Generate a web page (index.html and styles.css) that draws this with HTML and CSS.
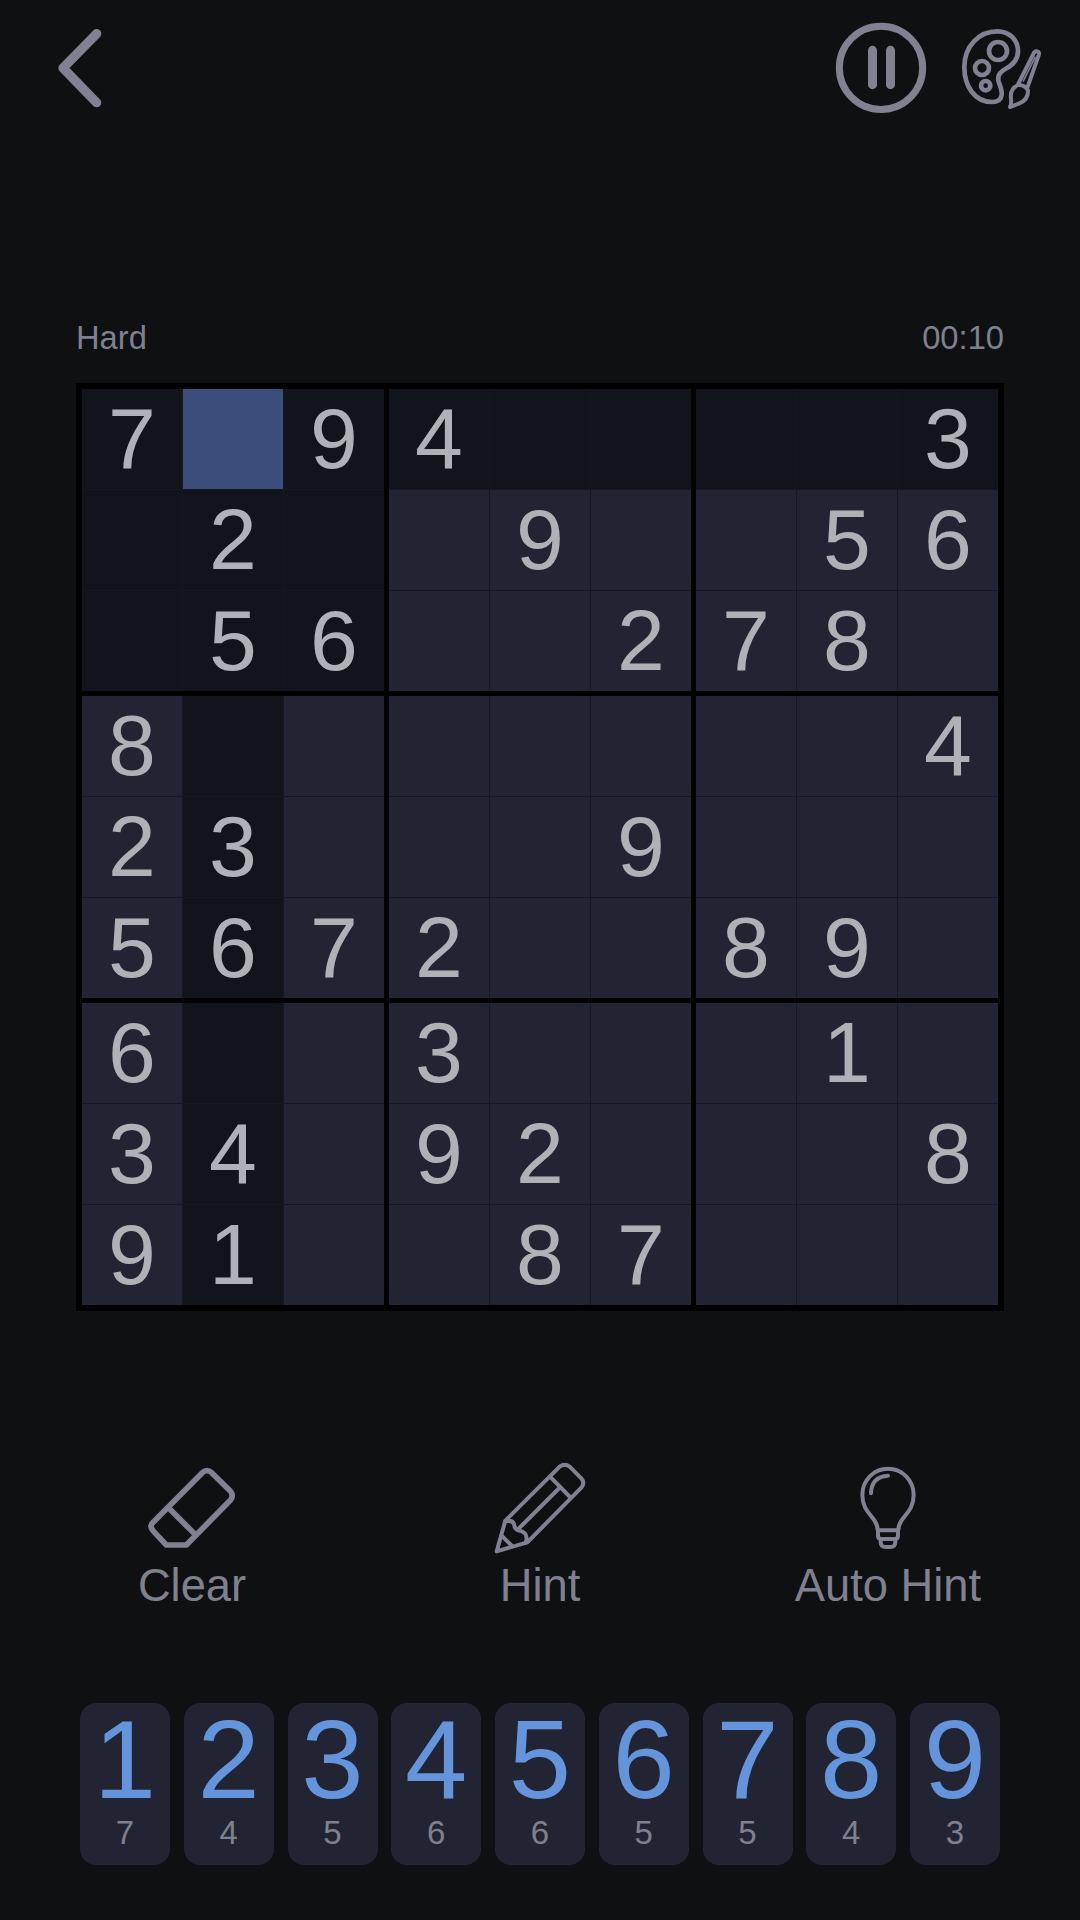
FILE: index.html
```html
<!DOCTYPE html>
<html lang="en">
<head>
  <meta charset="UTF-8">
  <meta name="viewport" content="width=device-width, initial-scale=1.0">
  <title>Sudoku</title>
  <link rel="stylesheet" href="styles.css">
</head>
<body>
  <header class="topbar">
    <svg class="icon back" viewBox="0 0 360 360" stroke-width="28">
      <path d="M200 71 L99 174 L200 278" />
    </svg>
    <svg class="icon" viewBox="0 0 360 360" stroke-width="21">
      <circle cx="183" cy="173.5" r="125" />
      <path d="M157.5 121 V224 M211.5 121 V224" stroke-width="27" />
    </svg>
    <svg class="icon" viewBox="360 0 360 360" stroke-width="14">
      <path d="M532 64 C570 64 594 91 594 124 C594 151 577 166 556 177 C539 186 531 198 536 215 C542 233 547 241 545 255 C543 270 532 276 516 276 C464 276 433 229 433 171 C433 108 477 64 532 64 Z" />
      <circle cx="534" cy="123" r="27" />
      <circle cx="486" cy="174" r="21" />
      <circle cx="497" cy="227" r="14" />
      <path d="M594 223 L642 128 Q646 122 652 124 Q658 126 657 133 L622 233" stroke-width="12" />
      <path d="M594 225 Q613 223 624 241 C625 263 610 275 598 280 Q584 286 570 291 Q575 282 573 266 C570 246 577 233 594 225 Z" stroke-width="12" />
      <path d="M610 213 L645 142" stroke-width="5" />
    </svg>
  </header>

  <main class="game">
    <div class="status">
      <span>Hard</span>
      <span>00:10</span>
    </div>
    <div class="board"></div>
  </main>

  <nav class="actions">
    <div class="action">
      <svg class="action-icon" viewBox="66 60 300 300" stroke-width="17">
        <path d="M247 98 Q261 86 275 98 L330 152 Q343 166 331 181 L199 315 H139 L98 271 Q88 258 98 248 Z" />
        <path d="M146 204 L222 280" />
      </svg>
      <span class="action-label">Clear</span>
    </div>
    <div class="action">
      <svg class="action-icon" viewBox="90 60 300 300" stroke-width="12">
        <path d="M136 242 L299 80 Q314 69 329 80 L364 115 Q376 129 364 143 L202 307 L110 334 Z" />
        <path d="M270 110 L330 171 M298 144 L176 266" />
        <path d="M136 244 Q157 239 162 252 Q164 270 179 272 Q198 278 198 288 Q202 297 197 307 M124 286 L156 318" />
      </svg>
      <span class="action-label">Hint</span>
    </div>
    <div class="action">
      <svg class="action-icon" viewBox="174 60 300 300" stroke-width="12">
        <path d="M293 270 C293 231 247 222 247 165 C247 121 281 86 324 86 C367 86 401 121 401 165 C401 222 355 231 355 270" />
        <path d="M294 271 H354 V287 Q354 297 344 297 H304 Q294 297 294 287 Z" />
        <path d="M302 300 V307 Q303 321 316 321 H332 Q345 321 346 307 V300" />
        <path d="M273 160 Q274 110 324 107" />
      </svg>
      <span class="action-label">Auto Hint</span>
    </div>
  </nav>

  <div class="keypad"></div>

  <script>
    const rows = [
      '7.94....3',
      '.2..9..56',
      '.56..278.',
      '8.......4',
      '23...9...',
      '5672..89.',
      '6..3...1.',
      '34.92...8',
      '91..87...'
    ];
    const selected = { row: 0, col: 1 };
    const remaining = [7, 4, 5, 6, 6, 5, 5, 4, 3];

    const board = document.querySelector('.board');
    for (let b = 0; b < 9; b++) {
      const box = document.createElement('div');
      box.className = 'box';
      for (let i = 0; i < 9; i++) {
        const row = Math.floor(b / 3) * 3 + Math.floor(i / 3);
        const col = (b % 3) * 3 + i % 3;
        const cell = document.createElement('div');
        cell.className = 'cell';
        if (row === selected.row && col === selected.col) {
          cell.classList.add('selected');
        } else if (row === selected.row || col === selected.col || b === 0) {
          cell.classList.add('peer');
        }
        cell.textContent = rows[row][col].replace('.', '');
        box.appendChild(cell);
      }
      board.appendChild(box);
    }

    const keypad = document.querySelector('.keypad');
    remaining.forEach(function(count, i) {
      const key = document.createElement('div');
      key.className = 'key';
      key.innerHTML = '<span class="digit">' + (i + 1) + '</span><span class="count">' + count + '</span>';
      keypad.appendChild(key);
    });
  </script>
</body>
</html>
```

FILE: styles.css
```css
* {
  margin: 0;
  padding: 0;
  box-sizing: border-box;
}

body {
  font-family: "Liberation Sans", Arial, sans-serif;
  background-color: #0f1011;
  color: #7f8090;
  width: 1080px;
  height: 1920px;
  overflow: hidden;
}

svg {
  display: block;
  fill: none;
  stroke: #808191;
  stroke-linecap: round;
  stroke-linejoin: round;
}

.topbar {
  display: flex;
  padding: 10px 20px 0 30px;
}

.icon {
  width: 120px;
  height: 120px;
}

.back {
  margin-right: auto;
}

.game {
  margin-top: 188px;
  padding: 0 76px;
}

.status {
  display: flex;
  justify-content: space-between;
  font-size: 32.7px;
  line-height: 40px;
}

.board {
  display: grid;
  grid-template-columns: repeat(3, 302px);
  gap: 5px;
  margin-top: 25px;
  border: 6px solid #000;
  background-color: #000;
}

.box {
  display: grid;
  grid-template-columns: repeat(3, 100px);
  grid-auto-rows: 100px;
  gap: 1px;
  background-color: #161821;
}

.cell {
  background-color: #222433;
  color: #b0b1b7;
  font-size: 86px;
  line-height: 99px;
  text-align: center;
}

.peer {
  background-color: #12141b;
}

.selected {
  background-color: #3b4e7b;
}

.actions {
  display: grid;
  grid-template-columns: repeat(3, 348px);
  justify-content: center;
  margin-top: 149px;
}

.action {
  display: flex;
  flex-direction: column;
  align-items: center;
}

.action-icon {
  width: 100px;
  height: 100px;
}

.action-label {
  font-size: 45.3px;
  line-height: 51px;
}

.keypad {
  display: flex;
  justify-content: space-between;
  margin-top: 92px;
  padding: 0 80px;
}

.key {
  display: flex;
  flex-direction: column;
  align-items: center;
  width: 90px;
  height: 162px;
  border-radius: 16px;
  background-color: #222433;
}

.digit {
  color: #6495dc;
  font-size: 112px;
  line-height: 113px;
}

.count {
  font-size: 33px;
  line-height: 33px;
}
```
